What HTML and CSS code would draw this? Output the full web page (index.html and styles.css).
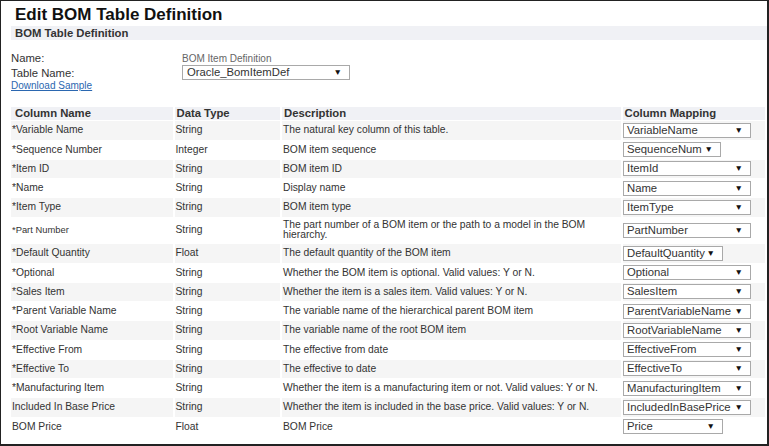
FILE: index.html
```html
<!DOCTYPE html>
<html>
<head>
<meta charset="utf-8">
<link rel="stylesheet" href="styles.css">
</head>
<body>
<div class="page">
  <h1 class="title">Edit BOM Table Definition</h1>
  <div class="section-bar">BOM Table Definition</div>
  <div class="form">
    <div class="form-row row-name">
      <span class="label">Name:</span>
      <span class="value-small">BOM Item Definition</span>
    </div>
    <div class="form-row row-table">
      <span class="label">Table Name:</span>
      <div class="sel sel-table"><span>Oracle_BomItemDef</span><span class="arrow">▼</span></div>
    </div>
    <div class="form-row row-link">
      <a class="link" href="#">Download Sample</a>
    </div>
  </div>
  <table class="grid">
    <colgroup>
      <col class="c1"><col class="c2"><col class="c3"><col class="c4">
    </colgroup>
    <thead>
      <tr><th class="h1c">Column Name</th><th>Data Type</th><th>Description</th><th class="h4c">Column Mapping</th></tr>
    </thead>
    <tbody>
      <tr><td>*Variable Name</td><td>String</td><td>The natural key column of this table.</td><td><div class="sel"><span>VariableName</span><span class="arrow">▼</span></div></td></tr>
      <tr><td>*Sequence Number</td><td>Integer</td><td>BOM item sequence</td><td><div class="sel narrow sn"><span>SequenceNum</span><span class="arrow">▼</span></div></td></tr>
      <tr><td>*Item ID</td><td>String</td><td>BOM item ID</td><td><div class="sel"><span>ItemId</span><span class="arrow">▼</span></div></td></tr>
      <tr><td>*Name</td><td>String</td><td>Display name</td><td><div class="sel"><span>Name</span><span class="arrow">▼</span></div></td></tr>
      <tr><td>*Item Type</td><td>String</td><td>BOM item type</td><td><div class="sel"><span>ItemType</span><span class="arrow">▼</span></div></td></tr>
      <tr class="tall"><td class="small">*Part Number</td><td>String</td><td class="wrap">The part number of a BOM item or the path to a model in the BOM hierarchy.</td><td><div class="sel"><span>PartNumber</span><span class="arrow">▼</span></div></td></tr>
      <tr><td>*Default Quantity</td><td>Float</td><td>The default quantity of the BOM item</td><td><div class="sel narrow"><span>DefaultQuantity</span><span class="arrow">▼</span></div></td></tr>
      <tr><td>*Optional</td><td>String</td><td>Whether the BOM item is optional. Valid values: Y or N.</td><td><div class="sel"><span>Optional</span><span class="arrow">▼</span></div></td></tr>
      <tr><td>*Sales Item</td><td>String</td><td>Whether the item is a sales item. Valid values: Y or N.</td><td><div class="sel"><span>SalesItem</span><span class="arrow">▼</span></div></td></tr>
      <tr><td>*Parent Variable Name</td><td>String</td><td>The variable name of the hierarchical parent BOM item</td><td><div class="sel"><span>ParentVariableName</span><span class="arrow">▼</span></div></td></tr>
      <tr><td>*Root Variable Name</td><td>String</td><td>The variable name of the root BOM item</td><td><div class="sel"><span>RootVariableName</span><span class="arrow">▼</span></div></td></tr>
      <tr><td>*Effective From</td><td>String</td><td>The effective from date</td><td><div class="sel"><span>EffectiveFrom</span><span class="arrow">▼</span></div></td></tr>
      <tr><td>*Effective To</td><td>String</td><td>The effective to date</td><td><div class="sel"><span>EffectiveTo</span><span class="arrow">▼</span></div></td></tr>
      <tr><td>*Manufacturing Item</td><td>String</td><td>Whether the item is a manufacturing item or not. Valid values: Y or N.</td><td><div class="sel"><span>ManufacturingItem</span><span class="arrow">▼</span></div></td></tr>
      <tr><td>Included In Base Price</td><td>String</td><td>Whether the item is included in the base price. Valid values: Y or N.</td><td><div class="sel"><span>IncludedInBasePrice</span><span class="arrow">▼</span></div></td></tr>
      <tr><td>BOM Price</td><td>Float</td><td>BOM Price</td><td><div class="sel narrow"><span>Price</span><span class="arrow">▼</span></div></td></tr>
    </tbody>
  </table>
</div>
</body>
</html>
```
FILE: styles.css
```css
html, body {
  margin: 0;
  padding: 0;
  height: 100%;
}
body {
  box-sizing: border-box;
  border-style: solid;
  border-color: #222;
  border-width: 1px 2px 2px 1px;
  background: #fff;
  font-family: "Liberation Sans", Arial, sans-serif;
  color: #333;
  overflow: hidden;
}
.page {
  padding-left: 10px;
}
.title {
  margin: 4px 0 0 4px;
  font-size: 17px;
  line-height: 20px;
  font-weight: bold;
  color: #111;
}
.section-bar {
  margin-top: 1px;
  height: 14px;
  line-height: 14px;
  background: #f0f1f5;
  padding-left: 4px;
  font-size: 11.3px;
  font-weight: bold;
  color: #333;
}
.form {
  margin-top: 12px;
  display: flex;
  flex-direction: column;
}
.form-row {
  display: flex;
  align-items: center;
}
.label {
  width: 171px;
  font-size: 11.3px;
  color: #333;
}
.row-name {
  height: 13px;
  align-items: baseline;
}
.row-name .label { line-height: 13px; }
.value-small {
  font-size: 10px;
  color: #666;
  line-height: 13px;
}
.row-table {
  height: 15px;
}
.row-link {
  height: 12px;
}
.link {
  font-size: 10px;
  line-height: 12px;
  color: #2b67b0;
  text-decoration: underline;
}
.sel {
  position: relative;
  box-sizing: border-box;
  width: 128px;
  height: 15px;
  border: 1px solid #a9a9a9;
  background: #fff;
  font-size: 11.3px;
  line-height: 13px;
  color: #333;
  padding-left: 3px;
  white-space: nowrap;
  overflow: hidden;
}
.sel.narrow { width: 100px; }
.sel.sn { width: 98px; }
.sel-table {
  width: 168px;
  padding-left: 4px;
}
.arrow {
  position: absolute;
  right: 7px;
  top: 0;
  font-size: 8.5px;
  line-height: 13px;
  color: #111;
}
.grid {
  margin-top: 14px;
  margin-left: -2px;
  width: calc(100% + 2px);
  border-collapse: separate;
  border-spacing: 2px 1px;
  table-layout: fixed;
}
.c1 { width: 161.5px; }
.c2 { width: 105.5px; }
.c3 { width: 339px; }
.c4 { width: auto; }
.grid th {
  background: #f0f1f5;
  text-align: left;
  font-size: 11.3px;
  font-weight: bold;
  color: #333;
  height: 13.3px;
  line-height: 13px;
  padding: 0 2px;
}
.grid th.h1c { padding-left: 4px; }
.grid th.h4c { padding-left: 1.5px; }
.grid td {
  font-size: 10.3px;
  color: #333;
  height: 18.25px;
  padding: 0 0 0 1px;
  vertical-align: middle;
  line-height: 12px;
}
.grid td:last-child { padding-left: 0; }
.grid tbody tr:nth-child(odd) td {
  background: #f5f5f5;
}
.grid tr.tall td {
  height: 25.75px;
}
.grid td.small {
  font-size: 9.4px;
  line-height: 10.8px;
}
.grid td.wrap {
  line-height: 10.5px;
}
```
